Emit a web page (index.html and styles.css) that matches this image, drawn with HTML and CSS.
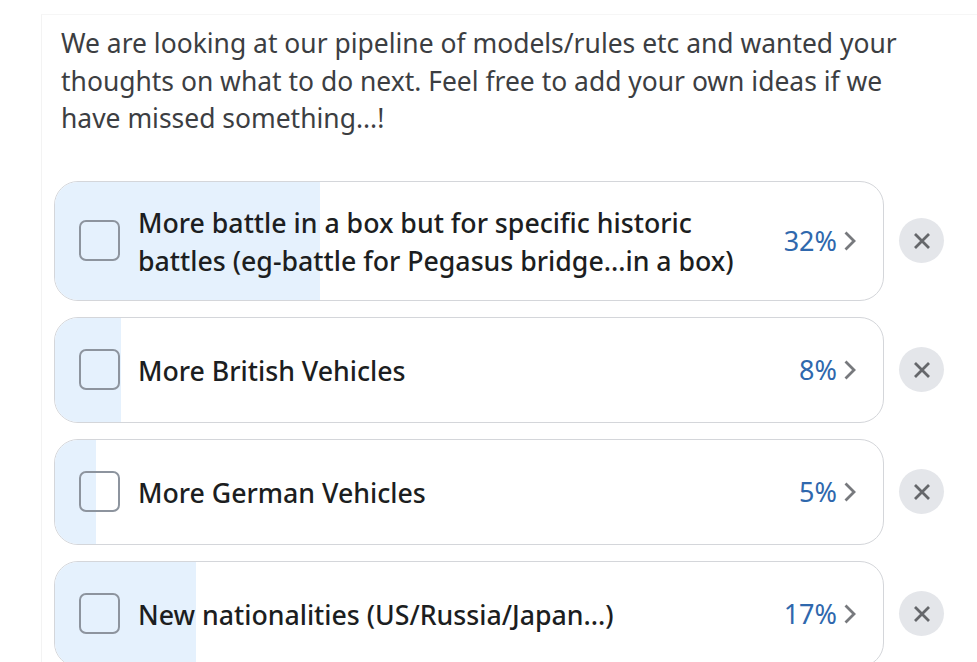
FILE: index.html
```html
<!DOCTYPE html>
<html lang="en">
<head>
<meta charset="utf-8">
<title>Poll</title>
<link rel="stylesheet" href="styles.css">
</head>
<body>
<main class="card">
  <p class="intro">We are looking at our pipeline of models/rules etc and wanted your thoughts on what to do next. Feel free to add your own ideas if we have missed something...!</p>
  <ul class="options">
    <li class="row">
      <div class="option">
        <div class="fill" style="width:32%"></div>
        <span class="check"></span>
        <span class="label">More battle in a box but for specific historic battles (eg-battle for Pegasus bridge...in a box)</span>
        <span class="pct">32%</span>
        <svg class="chev" viewBox="0 0 14 20"><path d="M2.5 1.5 11 10 2.500 18.500"/></svg>
      </div>
      <button class="close" aria-label="Remove"><svg viewBox="0 0 18 18"><path d="M2 2 16 16M16 2 2 16"/></svg></button>
    </li>
    <li class="row">
      <div class="option">
        <div class="fill" style="width:8%"></div>
        <span class="check"></span>
        <span class="label">More British Vehicles</span>
        <span class="pct">8%</span>
        <svg class="chev" viewBox="0 0 14 20"><path d="M2.5 1.5 11 10 2.500 18.500"/></svg>
      </div>
      <button class="close" aria-label="Remove"><svg viewBox="0 0 18 18"><path d="M2 2 16 16M16 2 2 16"/></svg></button>
    </li>
    <li class="row">
      <div class="option">
        <div class="fill" style="width:5%"></div>
        <span class="check"></span>
        <span class="label">More German Vehicles</span>
        <span class="pct">5%</span>
        <svg class="chev" viewBox="0 0 14 20"><path d="M2.5 1.5 11 10 2.500 18.500"/></svg>
      </div>
      <button class="close" aria-label="Remove"><svg viewBox="0 0 18 18"><path d="M2 2 16 16M16 2 2 16"/></svg></button>
    </li>
    <li class="row">
      <div class="option">
        <div class="fill" style="width:17%"></div>
        <span class="check"></span>
        <span class="label">New nationalities (US/Russia/Japan...)</span>
        <span class="pct">17%</span>
        <svg class="chev" viewBox="0 0 14 20"><path d="M2.5 1.5 11 10 2.500 18.500"/></svg>
      </div>
      <button class="close" aria-label="Remove"><svg viewBox="0 0 18 18"><path d="M2 2 16 16M16 2 2 16"/></svg></button>
    </li>
  </ul>
</main>
</body>
</html>
```
FILE: styles.css
```css
html, body {
  margin: 0;
  height: 100%;
  overflow: hidden;
  background: #fff;
}
body {
  padding: 14px 0 0 41px;
  box-sizing: border-box;
  font-family: "Noto Sans", "Open Sans", sans-serif;
}
.card {
  border-left: 1px solid #f3f3f3;
  border-top: 1px solid #f6f6f6;
  padding: 10px 0 0 12px;
}
.intro {
  margin: 0 0 43px 7px;
  width: 860px;
  font-size: 26.450px;
  line-height: 37.500px;
  color: #3c3e42;
}
.options {
  list-style: none;
  margin: 0;
  padding: 0;
  display: flex;
  flex-direction: column;
  gap: 16px;
}
.row {
  display: flex;
  align-items: center;
  gap: 15px;
}
.option {
  position: relative;
  overflow: hidden;
  flex: none;
  box-sizing: border-box;
  width: 830px;
  min-height: 106px;
  display: flex;
  align-items: center;
  padding: 0 26px 0 24px;
  border: 1px solid #d4d6da;
  border-radius: 24px;
  background: #fff;
}
.fill {
  position: absolute;
  left: 0;
  top: 0;
  bottom: 0;
  background: #e5f1fd;
}
.check {
  position: relative;
  flex: none;
  box-sizing: border-box;
  width: 41px;
  height: 41px;
  margin-right: 18px;
  border: 2px solid #8d949e;
  border-radius: 7px;
}
.label {
  position: relative;
  flex: 1;
  font-size: 26.700px;
  line-height: 38px;
  font-weight: 500;
  color: #1c1e21;
  padding: 22px 40px 20px 0;
}
.pct {
  position: relative;
  font-size: 27px;
  color: #2f68ad;
  margin-right: 6px;
}
.chev {
  position: relative;
  flex: none;
  width: 14px;
  height: 20px;
  fill: none;
  stroke: #77797d;
  stroke-width: 2.800;
}
.close {
  flex: none;
  width: 45px;
  height: 45px;
  padding: 0;
  border: 0;
  border-radius: 50%;
  background: #e4e6ea;
  display: flex;
  align-items: center;
  justify-content: center;
}
.close svg {
  width: 18px;
  height: 18px;
  fill: none;
  stroke: #65676b;
  stroke-width: 2.800;
}
```
